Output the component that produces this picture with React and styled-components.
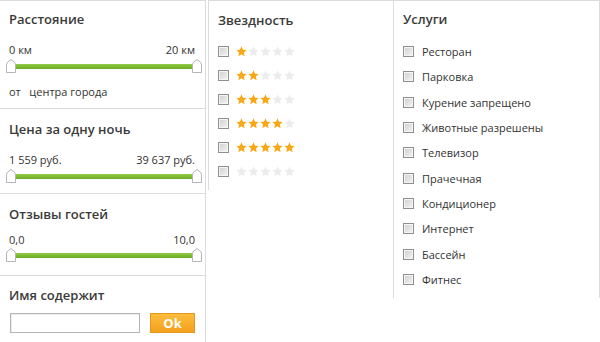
import React from "react";
import styled, { createGlobalStyle } from "styled-components";

const Global = createGlobalStyle`
  html, body { margin: 0; padding: 0; background: #fff; }
  body { font-family: "Open Sans", "Noto Sans", Arial, sans-serif; color: #333; }
  * { box-sizing: border-box; }
`;

const Page = styled.div`
  display: flex;
  align-items: flex-start;
  width: 600px;
  height: 342px;
  overflow: hidden;
`;

const LeftColumn = styled.div`
  width: 206px;
  height: 342px;
  border-top: 1px solid #dcdcdc;
  border-right: 1px solid #dcdcdc;
  margin-right: 2px;
  flex: none;
`;

const Section = styled.div`
  padding: ${(p) => p.$pt}px 10px ${(p) => p.$pb}px 9px;
  border-bottom: ${(p) => (p.$last ? "none" : "1px solid #dcdcdc")};
`;

const Title = styled.div`
  font-size: 13px;
  line-height: 18px;
  font-weight: 600;
  color: #3a3a3a;
  white-space: nowrap;
`;

const Labels = styled.div`
  display: flex;
  justify-content: space-between;
  font-size: 11px;
  line-height: 14px;
  color: #333;
  margin-top: ${(p) => p.$gap}px;
`;

const Note = styled.div`
  font-size: 11px;
  line-height: 14px;
  margin-top: 12px;
  color: #333;
`;

const SliderBox = styled.div`
  position: relative;
  height: 14px;
  margin: ${(p) => p.$gap}px -7px 0 -3px;
  padding-top: 5px;
`;

const Bar = styled.div`
  height: 5px;
  margin: 0 5px 0 4px;
  background: linear-gradient(#93cc45, #6cab26);
`;

const Handle = styled.svg`
  position: absolute;
  top: 0;
  ${(p) => (p.$side === "right" ? "right: 0;" : "left: 0;")}
  width: 10px;
  height: 14px;
`;

const Slider = ({ gap }) => (
  <SliderBox $gap={gap}>
    <Bar />
    {["left", "right"].map((s) => (
      <Handle key={s} $side={s} viewBox="0 0 10 14">
        <path
          d="M0.5 13.5 V5.2 Q0.5 3.2 5 0.6 Q9.5 3.2 9.5 5.2 V13.5 Z"
          fill="#fff"
          stroke="#b5b5b5"
          strokeWidth="1"
        />
      </Handle>
    ))}
  </SliderBox>
);

const Form = styled.div`
  display: flex;
  gap: 10px;
  margin-top: 9px;
  padding-left: 1px;
`;

const TextInput = styled.input`
  width: 130px;
  height: 20px;
  border: 1px solid #b4b4b4;
  box-shadow: inset 1px 1px 1px rgba(0, 0, 0, 0.08);
  background: #fff;
  outline: none;
  padding: 0 4px;
`;

const OkButton = styled.button`
  width: 47px;
  height: 20px;
  border: 1px solid #e5981c;
  background: linear-gradient(#fcbd3d, #f4a01c);
  color: #fff;
  font-family: "Open Sans", Arial, sans-serif;
  font-weight: 700;
  font-size: 13px;
  line-height: 18px;
  padding: 0;
  cursor: pointer;
`;

const Panel = styled.div`
  flex: none;
  width: ${(p) => p.$w}px;
  height: ${(p) => p.$h}px;
  border-top: 1px solid #dcdcdc;
  border-left: 1px solid #dcdcdc;
  border-right: ${(p) => (p.$right ? "1px solid #dcdcdc" : "none")};
  padding: ${(p) => p.$pt}px 0 0 9px;
`;

const List = styled.div`
  margin-top: ${(p) => p.$gap}px;
  display: flex;
  flex-direction: column;
`;

const Row = styled.label`
  display: flex;
  align-items: center;
  height: ${(p) => p.$h}px;
  gap: ${(p) => p.$gap}px;
  font-size: 11px;
  color: #333;
  white-space: nowrap;
`;

const Check = styled.input.attrs({ type: "checkbox" })`
  appearance: none;
  margin: 0;
  width: 11px;
  height: 11px;
  flex: none;
  border: 1px solid #8f8f8f;
  box-shadow: inset 0 0 0 1px #f5f5f5;
  background: linear-gradient(135deg, #cfcfcf, #f4f4f4);
`;

const Stars = styled.div`
  display: flex;
  gap: 1px;
`;

const Star = styled.svg`
  width: 11px;
  height: 11px;
  display: block;
  fill: ${(p) => (p.$on ? "#f8a815" : "#ececec")};
`;

const StarRow = ({ n }) => (
  <Row $h={24} $gap={7}>
    <Check />
    <Stars>
      {[0, 1, 2, 3, 4].map((i) => (
        <Star key={i} $on={i < n} viewBox="0 0 24 24">
          <polygon points="12,0.8 15.3,8 23.2,8.9 17.3,14.2 18.9,22.2 12,18.2 5.1,22.2 6.7,14.2 0.8,8.9 8.7,8" />
        </Star>
      ))}
    </Stars>
  </Row>
);

const services = [
  "Ресторан",
  "Парковка",
  "Курение запрещено",
  "Животные разрешены",
  "Телевизор",
  "Прачечная",
  "Кондиционер",
  "Интернет",
  "Бассейн",
  "Фитнес",
];

export default function App() {
  return (
    <>
      <Global />
      <Page>
        <LeftColumn>
          <Section $pt={9} $pb={9}>
            <Title>Расстояние</Title>
            <Labels $gap={15}>
              <span>0 км</span>
              <span>20 км</span>
            </Labels>
            <Slider gap={2} />
            <Note>от&nbsp;&nbsp;&nbsp;центра города</Note>
          </Section>
          <Section $pt={11} $pb={10}>
            <Title>Цена за одну ночь</Title>
            <Labels $gap={15}>
              <span>1 559 руб.</span>
              <span>39 637 руб.</span>
            </Labels>
            <Slider gap={2} />
          </Section>
          <Section $pt={11} $pb={13}>
            <Title>Отзывы гостей</Title>
            <Labels $gap={10}>
              <span>0,0</span>
              <span>10,0</span>
            </Labels>
            <Slider gap={1} />
          </Section>
          <Section $pt={10} $pb={0} $last>
            <Title>Имя содержит</Title>
            <Form>
              <TextInput />
              <OkButton>Ok</OkButton>
            </Form>
          </Section>
        </LeftColumn>

        <Panel $w={185} $h={190} $pt={10}>
          <Title>Звездность</Title>
          <List $gap={10.5}>
            {[1, 2, 3, 4, 5, 0].map((n, i) => (
              <StarRow key={i} n={n} />
            ))}
          </List>
        </Panel>

        <Panel $w={207} $h={298} $pt={9} $right>
          <Title>Услуги</Title>
          <List $gap={10.8}>
            {services.map((s) => (
              <Row key={s} $h={25.33} $gap={8}>
                <Check />
                <span>{s}</span>
              </Row>
            ))}
          </List>
        </Panel>
      </Page>
    </>
  );
}
